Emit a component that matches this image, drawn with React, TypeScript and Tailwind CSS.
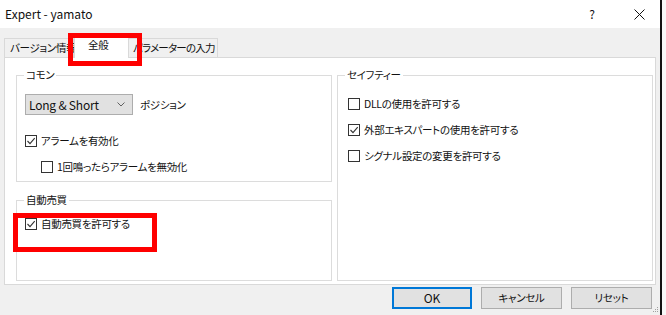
import clsx from "clsx";

const Check = ({
  checked = false,
  label,
  className,
}: {
  checked?: boolean;
  label: string;
  className?: string;
}) => (
  <label className={clsx("flex items-center gap-[4px] h-[16px]", className)}>
    <span className="w-[12px] h-[12px] border border-[#333333] bg-white flex items-center justify-center shrink-0">
      {checked && (
        <svg width="10" height="10" viewBox="0 0 10 10">
          <path d="M1.5 5 L4 7.6 L8.7 2.2" stroke="#333333" strokeWidth="1.1" fill="none" />
        </svg>
      )}
    </span>
    <span>{label}</span>
  </label>
);

const App = () => {
  return (
    <div className="w-[666px] h-[315px] flex overflow-hidden bg-[#f0f0f0] text-[#111111] text-[10.5px] tracking-[-0.3px] leading-[16px] font-['Noto_Sans_CJK_JP',sans-serif] [font-feature-settings:'palt']">
      <div className="w-[660px] h-full flex flex-col relative">
        {/* title bar */}
        <div className="h-[28px] bg-white flex items-center pl-[5px] shrink-0">
          <span className="text-[12px] tracking-normal">Expert - yamato</span>
          <span className="ml-auto w-[14px] text-center text-[12px] mr-[35px]">?</span>
          <svg width="11" height="11" viewBox="0 0 11 11" className="mr-[15px]">
            <path d="M0.5 0.5 L10.5 10.5 M10.5 0.5 L0.5 10.5" stroke="#111" strokeWidth="1" />
          </svg>
        </div>

        <div className="flex-1 flex flex-col px-[4px] pt-[6px]">
          {/* tabs */}
          <div className="flex items-end h-[23px]">
            <div className="w-[70px] h-[19px] border border-b-0 border-[#d9d9d9] pl-[5px] pt-[1px] whitespace-nowrap">
              バージョン情報
            </div>
            <div className="w-[55px] h-[24px] -mb-px bg-white border border-b-0 border-[#d9d9d9] pl-[13px] pt-[2px] relative z-10">
              全般
            </div>
            <div className="w-[89px] h-[19px] border border-b-0 border-l-0 border-[#d9d9d9] pl-[4px] pt-[1px] whitespace-nowrap tracking-[-0.8px]">
              パラメーターの入力
            </div>
          </div>

          {/* panel */}
          <div className="h-[228px] bg-white border border-[#d9d9d9] flex gap-[5px] pl-[11px] pt-[9px]">
            <div className="flex flex-col gap-[10px]">
              <fieldset className="w-[316px] h-[115px] border border-[#dcdcdc] pl-[8px]">
                <legend className="ml-[-1px] px-[2px]">コモン</legend>
                <div className="flex items-center gap-[7px] mt-[11px]">
                  <div className="w-[108px] h-[21px] bg-[#e1e1e1] border border-[#adadad] flex items-center pl-[3px] pr-[7px] text-[12px] tracking-[-0.2px]">
                    <span>Long &amp; Short</span>
                    <svg width="8" height="5" viewBox="0 0 8 5" className="ml-auto">
                      <path d="M0.5 0.5 L4 4 L7.5 0.5" stroke="#606060" strokeWidth="1" fill="none" />
                    </svg>
                  </div>
                  <span>ポジション</span>
                </div>
                <Check checked label="アラームを有効化" className="mt-[18px]" />
                <Check label="1回鳴ったらアラームを無効化" className="mt-[10px] ml-[16px]" />
              </fieldset>
              <fieldset className="w-[316px] h-[89px] border border-[#dcdcdc] pl-[8px]">
                <legend className="ml-[-1px] px-[2px]">自動売買</legend>
                <Check checked label="自動売買を許可する" className="mt-[8px]" />
              </fieldset>
            </div>
            <fieldset className="w-[316px] h-[214px] border border-[#dcdcdc] pl-[10px]">
              <legend className="ml-[-3px] px-[2px]">セイフティー</legend>
              <Check label="DLLの使用を許可する" className="mt-[13px]" />
              <Check checked label="外部エキスパートの使用を許可する" className="mt-[10px]" />
              <Check label="シグナル設定の変更を許可する" className="mt-[10px]" />
            </fieldset>
          </div>

          {/* buttons */}
          <div className="flex justify-end gap-[9px] pr-[4px] mt-[2px]">
            <button className="w-[80px] h-[22px] bg-[#e1e1e1] border-2 border-[#0078d7] text-[12px] tracking-normal">OK</button>
            <button className="w-[81px] h-[22px] bg-[#e1e1e1] border border-[#adadad]">キャンセル</button>
            <button className="w-[81px] h-[22px] bg-[#e1e1e1] border border-[#adadad]">リセット</button>
          </div>
        </div>

        {/* resize grip */}
        <svg width="6" height="6" viewBox="0 0 6 6" className="absolute right-[1px] bottom-[2px]">
          <rect x="4" y="0" width="1" height="1" fill="#a0a0a0" />
          <rect x="2" y="2" width="1" height="1" fill="#a0a0a0" />
          <rect x="4" y="2" width="1" height="1" fill="#a0a0a0" />
          <rect x="0" y="4" width="1" height="1" fill="#a0a0a0" />
          <rect x="2" y="4" width="1" height="1" fill="#a0a0a0" />
          <rect x="4" y="4" width="1" height="1" fill="#a0a0a0" />
        </svg>

        {/* annotations */}
        <div className="absolute left-[68px] top-[33px] w-[74px] h-[33px] border-[5px] border-[#ff0000] z-20" />
        <div className="absolute left-[13px] top-[213px] w-[144px] h-[39px] border-[5px] border-[#ff0000] z-20" />
      </div>
      <div className="w-[2px] h-full bg-[#111111]" />
      <div className="flex-1 h-full bg-[#f7f7f7]" />
    </div>
  );
};

export default App;
